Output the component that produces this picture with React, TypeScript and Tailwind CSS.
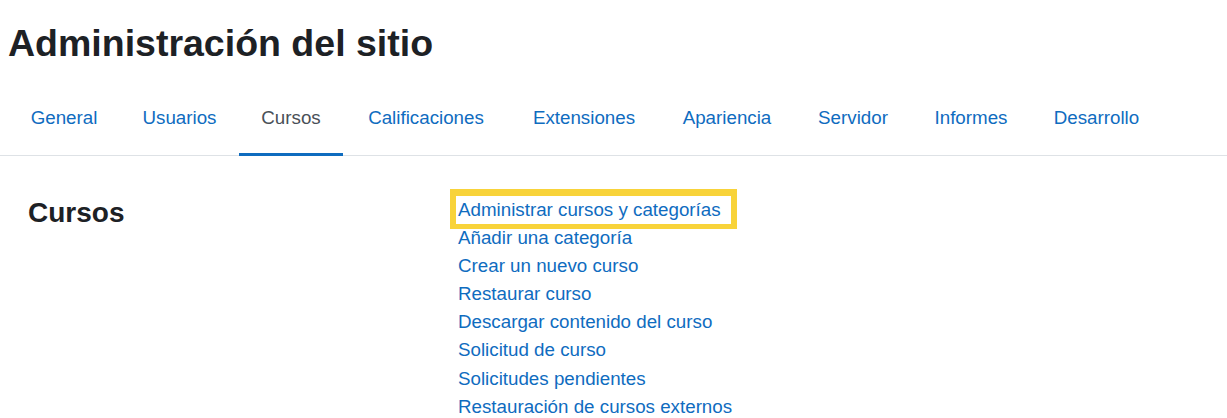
const tabs = [
  { label: "General", w: "w-[112px]" },
  { label: "Usuarios", w: "w-[119px]" },
  { label: "Cursos", w: "w-[104px]" },
  { label: "Calificaciones", w: "w-[166px]" },
  { label: "Extensiones", w: "w-[150px]" },
  { label: "Apariencia", w: "w-[136px]" },
  { label: "Servidor", w: "w-[116px]" },
  { label: "Informes", w: "w-[120px]" },
  { label: "Desarrollo", w: "w-[131px]" },
];

const links = [
  "Administrar cursos y categorías",
  "Añadir una categoría",
  "Crear un nuevo curso",
  "Restaurar curso",
  "Descargar contenido del curso",
  "Solicitud de curso",
  "Solicitudes pendientes",
  "Restauración de cursos externos",
];

export default function App() {
  return (
    <div className="min-h-screen bg-white overflow-hidden font-['Liberation_Sans',Arial,sans-serif] text-[18.75px] leading-[1.5] text-[#1d2125]">
      {/* Page header */}
      <div className="px-2 pt-[21px]">
        <h1 className="text-[37.5px] leading-[45px] font-bold text-[#1d2125]">
          Administración del sitio
        </h1>
      </div>

      {/* Secondary navigation */}
      <nav className="mt-[12px] border-b border-[#dee2e6]">
        <ul className="flex pl-2">
          {tabs.map((tab) => {
            const active = tab.label === "Cursos";
            return (
              <li key={tab.label} className={`relative ${tab.w}`}>
                <a
                  href="#"
                  className={`flex h-[77px] items-center justify-center pt-[3px] whitespace-nowrap ${
                    active ? "text-[#495057]" : "text-[#0f6cbf]"
                  }`}
                >
                  {tab.label}
                </a>
                {active && (
                  <span className="absolute left-0 right-0 bottom-[-1px] h-[3px] bg-[#0f6cbf]" />
                )}
              </li>
            );
          })}
        </ul>
      </nav>

      {/* Category content */}
      <div className="flex pt-[40px]">
        <div className="w-[458px] shrink-0 pl-[28px]">
          <h3 className="text-[28px] leading-[33.75px] font-bold text-[#1d2125]">Cursos</h3>
        </div>
        <ul className="flex flex-col">
          {links.map((link, i) => (
            <li key={link} className="h-[28.1px]">
              {i === 0 ? (
                <a
                  href="#"
                  className="-ml-[2px] inline-block h-[28px] bg-white pl-[2px] pr-[10px] text-[#0f6cbf] shadow-[0_-1px_0_6px_#f8d33a]"
                >
                  {link}
                </a>
              ) : (
                <a href="#" className="text-[#0f6cbf]">
                  {link}
                </a>
              )}
            </li>
          ))}
        </ul>
      </div>
    </div>
  );
}
